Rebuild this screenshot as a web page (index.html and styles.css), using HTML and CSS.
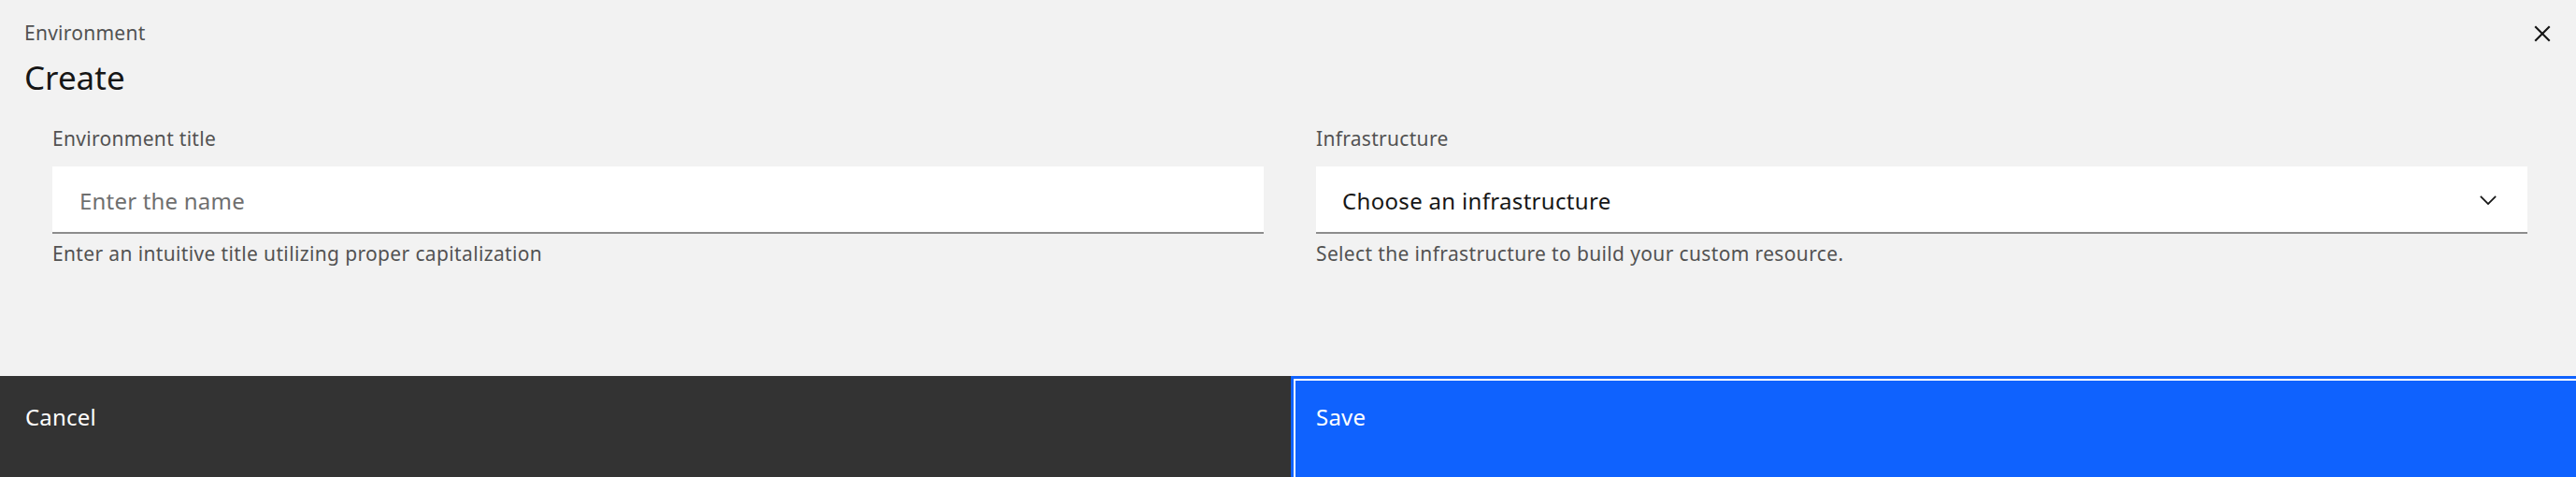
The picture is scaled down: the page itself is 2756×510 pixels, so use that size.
FILE: index.html
```html
<!DOCTYPE html>
<html lang="en">
<head>
<meta charset="utf-8">
<title>Create Environment</title>
<link rel="stylesheet" href="styles.css">
</head>
<body>
<div class="modal">
  <header class="modal-header">
    <div class="titles">
      <p class="modal-label">Environment</p>
      <h2 class="modal-heading">Create</h2>
    </div>
    <button class="close-btn" aria-label="Close">
      <svg width="34" height="34" viewBox="0 0 32 32" aria-hidden="true"><path d="M17.4141 16L24 9.4141 22.5859 8 16 14.5859 9.4143 8 8 9.4141 14.5859 16 8 22.5859 9.4143 24 16 17.4141 22.5859 24 24 22.5859 17.4141 16z" fill="#161616"/></svg>
    </button>
  </header>
  <div class="modal-body">
    <div class="field">
      <label class="field-label" for="env-title">Environment title</label>
      <input class="text-input" id="env-title" type="text" placeholder="Enter the name">
      <p class="helper">Enter an intuitive title utilizing proper capitalization</p>
    </div>
    <div class="field">
      <label class="field-label" for="infra">Infrastructure</label>
      <div class="select-wrap">
        <select class="select" id="infra">
          <option>Choose an infrastructure</option>
        </select>
        <svg class="chevron" width="28" height="28" viewBox="0 0 16 16" aria-hidden="true"><path d="M8 11L3 6 3.7 5.3 8 9.6 12.3 5.3 13 6z" fill="#161616"/></svg>
      </div>
      <p class="helper">Select the infrastructure to build your custom resource.</p>
    </div>
  </div>
  <footer class="modal-footer">
    <button class="btn btn-secondary"><span>Cancel</span></button>
    <button class="btn btn-primary"><span>Save</span></button>
  </footer>
</div>
</body>
</html>
```

FILE: styles.css
```css
* { box-sizing: border-box; }
html, body { margin: 0; padding: 0; }
body {
  width: 2756px;
  height: 510px;
  background: #f2f2f2;
  font-family: "Noto Sans", "Open Sans", sans-serif;
  overflow: hidden;
}
.modal {
  height: 510px;
  display: flex;
  flex-direction: column;
  background: #f2f2f2;
  overflow: hidden;
}
.modal-header {
  display: flex;
  justify-content: space-between;
  align-items: flex-start;
}
.titles {
  padding: 22px 0 0 26px;
}
.modal-label {
  margin: 0;
  font-size: 21px;
  line-height: 27px;
  color: #525252;
  letter-spacing: 0.25px;
}
.modal-heading {
  margin: 13px 0 0;
  font-size: 35px;
  line-height: 42px;
  font-weight: 400;
  color: #161616;
}
.close-btn {
  width: 72px;
  height: 72px;
  border: 0;
  padding: 0;
  background: transparent;
  display: flex;
  align-items: center;
  justify-content: center;
  cursor: pointer;
}
.modal-body {
  height: 298px;
  flex: none;
  display: grid;
  grid-template-columns: 1fr 1fr;
  column-gap: 56px;
  padding: 31px 52px 0 56px;
  align-items: start;
}
.field {
  display: flex;
  flex-direction: column;
}
.field-label {
  font-size: 21px;
  line-height: 27px;
  color: #525252;
  margin-bottom: 16px;
  letter-spacing: 0.3px;
}
.text-input, .select {
  width: 100%;
  height: 72px;
  border: 0;
  border-bottom: 2px solid #8d8d8d;
  background: #ffffff;
  padding: 2px 24px 0 29px;
  font-family: "Noto Sans", "Open Sans", sans-serif;
  font-size: 24px;
  color: #161616;
  outline: none;
  border-radius: 0;
  letter-spacing: 0.2px;
}
.text-input::placeholder {
  color: #6f6f6f;
  opacity: 1;
}
.select {
  -webkit-appearance: none;
  appearance: none;
  padding-left: 28px;
  letter-spacing: 0.32px;
}
.select-wrap {
  position: relative;
}
.chevron {
  position: absolute;
  right: 28px;
  top: 22px;
  pointer-events: none;
}
.helper {
  margin: 8px 0 0;
  font-size: 21px;
  line-height: 27px;
  color: #525252;
  letter-spacing: 0.36px;
}
.modal-footer {
  flex: none;
  height: 120px;
  width: 2768px;
  display: grid;
  grid-template-columns: 1381px 1387px;
}
.btn {
  border: 3px solid transparent;
  margin: 0;
  font-family: "Noto Sans", "Open Sans", sans-serif;
  font-size: 24px;
  line-height: 32px;
  letter-spacing: 0.2px;
  color: #ffffff;
  padding: 25px 24px 0 24px;
  display: flex;
  align-items: flex-start;
  justify-content: flex-start;
  text-align: left;
  cursor: pointer;
}
.btn-secondary {
  background: #333333;
  border-color: #333333;
}
.btn-primary {
  background: #0f62fe;
  border-color: #0f62fe;
  box-shadow: inset 0 0 0 2px #ffffff;
}
```
